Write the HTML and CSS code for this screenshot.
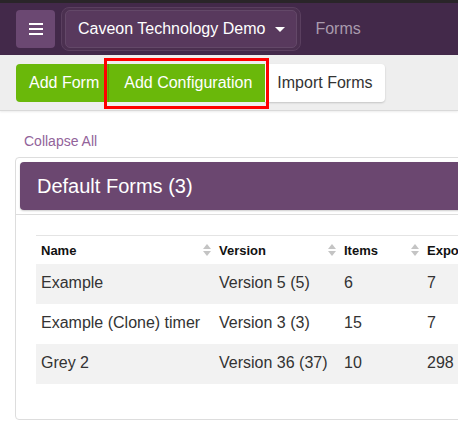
FILE: index.html
```html
<!DOCTYPE html>
<html lang="en">
<head>
<meta charset="utf-8">
<title>Forms</title>
<link rel="stylesheet" href="styles.css">
</head>
<body>
<div class="page">
  <header class="navbar">
    <button class="menu-btn" aria-label="Menu">
      <svg width="14" height="12" viewBox="0 0 14 12"><rect x="0" y="0" width="14" height="2" fill="#fff"/><rect x="0" y="5" width="14" height="2" fill="#fff"/><rect x="0" y="10" width="14" height="2" fill="#fff"/></svg>
    </button>
    <div class="org-ring">
      <button class="org-btn">Caveon Technology Demo<span class="caret"></span></button>
    </div>
    <span class="nav-link">Forms</span>
  </header>

  <div class="toolbar">
    <div class="btn-group">
      <button class="btn btn-green btn-add-form">Add Form</button>
      <button class="btn btn-green btn-add-config">Add Configuration<span class="highlight"></span></button>
      <button class="btn btn-white btn-import">Import Forms</button>
    </div>
  </div>

  <main class="content">
    <a class="collapse-link">Collapse All</a>
    <section class="panel">
      <div class="panel-head-wrap">
        <div class="panel-head">Default Forms (3)</div>
      </div>
      <div class="panel-body">
        <table class="forms-table">
          <colgroup>
            <col class="c-name"><col class="c-version"><col class="c-items"><col class="c-exports">
          </colgroup>
          <thead>
            <tr>
              <th><div class="th-in"><span>Name</span><svg class="sort" width="8" height="14" viewBox="0 0 8 14"><path d="M0 6 L4 1 L8 6 Z" fill="#c4c4c4"/><path d="M0 8 L4 13 L8 8 Z" fill="#c4c4c4"/></svg></div></th>
              <th><div class="th-in"><span>Version</span><svg class="sort" width="8" height="14" viewBox="0 0 8 14"><path d="M0 6 L4 1 L8 6 Z" fill="#c4c4c4"/><path d="M0 8 L4 13 L8 8 Z" fill="#c4c4c4"/></svg></div></th>
              <th><div class="th-in"><span>Items</span><svg class="sort" width="8" height="14" viewBox="0 0 8 14"><path d="M0 6 L4 1 L8 6 Z" fill="#c4c4c4"/><path d="M0 8 L4 13 L8 8 Z" fill="#c4c4c4"/></svg></div></th>
              <th><div class="th-in"><span>Exports</span></div></th>
            </tr>
          </thead>
          <tbody>
            <tr class="odd"><td>Example</td><td>Version 5 (5)</td><td>6</td><td>7</td></tr>
            <tr><td>Example (Clone) timer</td><td>Version 3 (3)</td><td>15</td><td>7</td></tr>
            <tr class="odd"><td>Grey 2</td><td>Version 36 (37)</td><td>10</td><td>298</td></tr>
          </tbody>
        </table>
      </div>
    </section>
  </main>
</div>
</body>
</html>
```

FILE: styles.css
```css
html, body {
  margin: 0;
  padding: 0;
  background: #ffffff;
}

body {
  font-family: "Liberation Sans", Arial, sans-serif;
  color: #333333;
  overflow: hidden;
}

.page {
  width: 100%;
  overflow: hidden;
}

/* ---------- navbar ---------- */
.navbar {
  display: flex;
  align-items: center;
  height: 52px;
  border-top: 3px solid #2a2529;
  background: #43294a;
  padding-left: 16px;
}

.menu-btn {
  width: 39px;
  height: 38px;
  border: none;
  border-radius: 4px;
  background: #6b4872;
  display: flex;
  align-items: center;
  justify-content: center;
  padding: 0;
  margin-right: 6px;
}

.org-ring {
  padding: 2px 3px;
  border: 1px solid #5a3f5f;
  border-radius: 8px;
  background: #4b3050;
}

.org-btn {
  display: flex;
  align-items: center;
  height: 38px;
  padding: 0 11px 0 12px;
  border: 1px solid #634868;
  border-radius: 5px;
  background: #58395d;
  color: #ffffff;
  font-family: "Liberation Sans", Arial, sans-serif;
  font-size: 16px;
}

.caret {
  width: 0;
  height: 0;
  margin-left: 10px;
  border-top: 5px solid #ffffff;
  border-left: 5px solid transparent;
  border-right: 5px solid transparent;
}

.nav-link {
  margin-left: 14px;
  font-size: 16px;
  color: #a99aad;
}

/* ---------- toolbar ---------- */
.toolbar {
  background: #eeeeee;
  padding: 9px 16px 8px;
  border-bottom: 1px solid #d9d9d9;
  box-shadow: 0 1px 2px rgba(0, 0, 0, 0.08);
}

.btn-group {
  display: flex;
}

.btn {
  height: 38px;
  border: none;
  font-family: "Liberation Sans", Arial, sans-serif;
  font-size: 16px;
  white-space: nowrap;
}

.btn-green {
  background: #6ab80a;
  color: #ffffff;
}

.btn-white {
  background: #ffffff;
  color: #333333;
  box-shadow: 0 1px 2px rgba(0, 0, 0, 0.18);
}

.btn-add-form {
  padding: 0 9px 0 13px;
  border-radius: 4px 0 0 4px;
}

.btn-add-config {
  position: relative;
  padding: 0 13px 0 15px;
  border-left: 1px solid #5b9f08;
}

.btn-import {
  padding: 0 13px 0 12px;
  border-radius: 0 4px 4px 0;
}

.highlight {
  position: absolute;
  left: -5px;
  right: -4px;
  top: -6px;
  bottom: -7px;
  border: 3px solid #ff0000;
  pointer-events: none;
  z-index: 2;
}

/* ---------- content ---------- */
.content {
  padding: 20px 0 0 15px;
}

.collapse-link {
  display: block;
  margin-left: 9px;
  font-size: 14px;
  line-height: 20px;
  color: #92639a;
}

.panel {
  width: 640px;
  margin-top: 6px;
  border: 1px solid #dddddd;
  border-radius: 4px;
  background: #ffffff;
}

.panel-head-wrap {
  padding: 4px;
  border-bottom: 1px solid #dddddd;
}

.panel-head {
  height: 48px;
  display: flex;
  align-items: center;
  padding-left: 17px;
  background: #6b4770;
  border-radius: 4px;
  box-shadow: 0 1px 2px rgba(0, 0, 0, 0.2);
  color: #ffffff;
  font-size: 20px;
}

.panel-body {
  padding: 20px 20px 35px 20px;
}

/* ---------- table ---------- */
.forms-table {
  border-collapse: collapse;
  table-layout: fixed;
  width: 586px;
}

.c-name { width: 178px; }
.c-version { width: 125px; }
.c-items { width: 83px; }
.c-exports { width: 200px; }

.forms-table th {
  height: 28px;
  padding: 0 3px 0 5px;
  border-top: 1px solid #e4e4e4;
  text-align: left;
  font-size: 13px;
  font-weight: bold;
  color: #111111;
}

.th-in {
  display: flex;
  align-items: center;
  justify-content: space-between;
}

.forms-table td {
  height: 38px;
  padding: 0 5px 2px;
  font-size: 16px;
  color: #333333;
  white-space: nowrap;
}

.forms-table tr.odd td {
  background: #f2f2f2;
}
```
